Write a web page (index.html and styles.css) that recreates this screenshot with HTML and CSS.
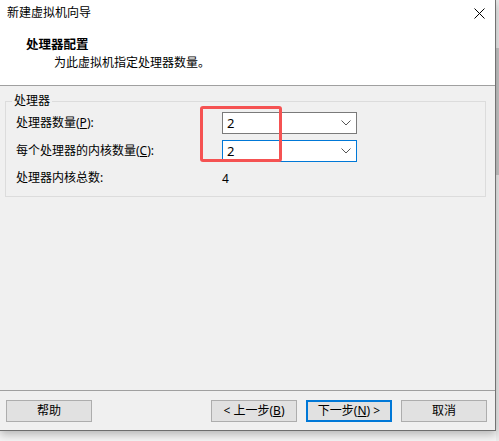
FILE: index.html
```html
<!DOCTYPE html>
<html lang="zh-CN">
<head>
<meta charset="utf-8">
<title>新建虚拟机向导</title>
<link rel="stylesheet" href="styles.css">
</head>
<body>
<div class="page">
  <div class="window">
    <header class="head">
      <div class="titlebar">
        <span class="title">新建虚拟机向导</span>
        <svg class="close" width="11" height="11" viewBox="0 0 11 11"><path d="M0.5 0.5 L10.5 10.5 M10.5 0.5 L0.5 10.5" stroke="#000" stroke-width="1" fill="none"/></svg>
      </div>
      <div class="heading">处理器配置</div>
      <div class="subtitle">为此虚拟机指定处理器数量。</div>
    </header>
    <main class="content">
      <fieldset class="group">
        <legend>处理器</legend>
        <div class="grid">
          <span class="label">处理器数量(<u>P</u>):</span>
          <div class="combo"><span>2</span><svg class="chev" width="10" height="6" viewBox="0 0 10 6"><path d="M0.5 0.5 L5 5 L9.5 0.5" stroke="#555" stroke-width="1" fill="none"/></svg></div>
          <span class="label">每个处理器的内核数量(<u>C</u>):</span>
          <div class="combo focused"><span>2</span><svg class="chev" width="10" height="6" viewBox="0 0 10 6"><path d="M0.5 0.5 L5 5 L9.5 0.5" stroke="#555" stroke-width="1" fill="none"/></svg></div>
          <span class="label total">处理器内核总数:</span>
          <span class="value total">4</span>
        </div>
      </fieldset>
    </main>
    <footer class="foot">
      <button class="btn">帮助</button>
      <div class="spacer"></div>
      <div class="nav">
        <button class="btn">&lt; 上一步(<u>B</u>)</button>
        <button class="btn default">下一步(<u>N</u>) &gt;</button>
        <button class="btn">取消</button>
      </div>
    </footer>
    <div class="highlight"></div>
  </div>
  <div class="strip"><div class="thumb"></div></div>
</div>
</body>
</html>
```

FILE: styles.css
```css
* { box-sizing: border-box; }
html, body { margin: 0; padding: 0; }
body {
  background: #f4f4f4;
  font-family: "Noto Sans", "Noto Sans CJK SC", sans-serif;
  font-size: 12px;
  color: #000;
  width: 499px;
  height: 441px;
  overflow: hidden;
}
.page {
  display: flex;
  align-items: flex-start;
}
.window {
  position: relative;
  width: 496px;
  height: 431px;
  flex: none;
  background: #f0f0f0;
  border-right: 1px solid #737373;
  border-bottom: 1px solid #6e6e6e;
  box-shadow: 0 3px 9px rgba(0, 0, 0, 0.28);
  display: flex;
  flex-direction: column;
}
.head {
  height: 86px;
  background: #fff;
  border-bottom: 1px solid #a0a0a0;
  flex: none;
}
.titlebar {
  display: flex;
  justify-content: space-between;
  align-items: flex-start;
  padding: 4px 10px 0 7px;
  line-height: 17px;
  height: 21px;
}
.close { margin-top: 4px; display: block; }
.heading {
  margin-top: 15px;
  padding-left: 26px;
  line-height: 17px;
  font-weight: 700;
  font-size: 12.5px;
}
.subtitle {
  margin-top: 1px;
  padding-left: 54px;
  line-height: 17px;
}
.content {
  height: 304px;
  flex: none;
  padding-top: 8px;
}
.group {
  margin: 0 0 0 5px;
  width: 481px;
  border: 1px solid #dcdcdc;
  padding: 4px 10px 8px 10px;
  min-width: 0;
}
.group legend {
  padding: 0 2px;
  margin-left: -4px;
  line-height: 14px;
}
.grid {
  display: grid;
  grid-template-columns: 206px 135px;
  grid-template-rows: 22px 22px 20px;
  row-gap: 6px;
  align-items: center;
}
.label { line-height: 16px; }
u { text-underline-offset: 1px; }
.combo {
  height: 22px;
  background: #fff;
  border: 1px solid #7a7a7a;
  display: flex;
  align-items: center;
  justify-content: space-between;
  padding: 0 5px 0 4px;
  font-size: 13px;
}
.combo.focused { border-color: #0078d7; }
.chev { display: block; }
.value { padding-left: 0; }
.foot {
  flex: none;
  border-top: 1px solid #a0a0a0;
  padding: 9px 8px 8px 6px;
  display: flex;
  align-items: center;
}
.spacer { flex: 1; }
.nav {
  display: flex;
  gap: 9px;
}
.btn {
  width: 86px;
  height: 22px;
  background: #e1e1e1;
  border: 1px solid #adadad;
  font-family: inherit;
  font-size: 12px;
  color: #000;
  padding: 0;
  line-height: 18px;
}
.btn.default { border: 2px solid #0078d7; }
.highlight {
  position: absolute;
  left: 200px;
  top: 106px;
  width: 82px;
  height: 56px;
  border: 3px solid #f55252;
  border-radius: 3px;
}
.strip {
  width: 3px;
  height: 441px;
  background: #ebebeb;
  padding-top: 48px;
}
.thumb {
  height: 127px;
  background: #c6c6c6;
}
```
